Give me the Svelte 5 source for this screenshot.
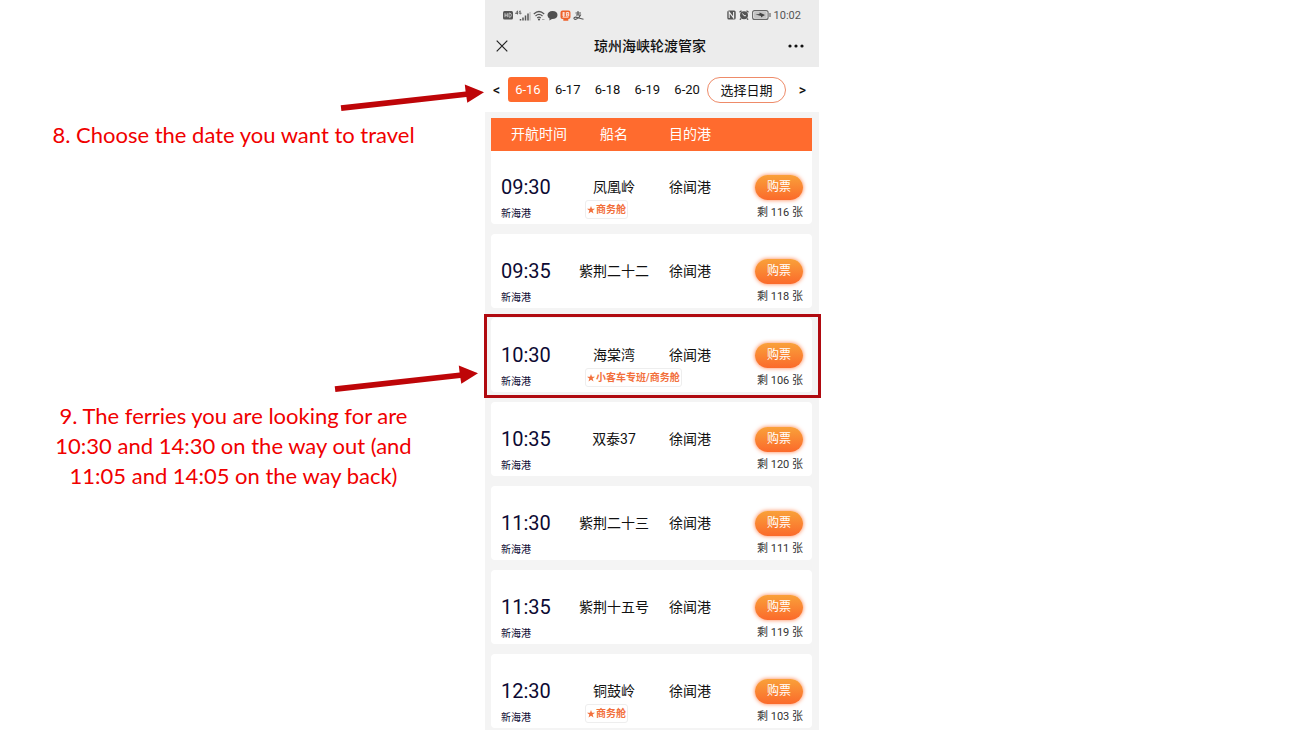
<script>
  const dates = ['6-16', '6-17', '6-18', '6-19', '6-20'];
  let selected = $state('6-16');

  const sailings = [
    { time: '09:30', ship: '凤凰岭', tag: '商务舱', left: 116 },
    { time: '09:35', ship: '紫荆二十二', tag: '', left: 118 },
    { time: '10:30', ship: '海棠湾', tag: '小客车专班/商务舱', left: 106, marked: true },
    { time: '10:35', ship: '双泰37', tag: '', left: 120 },
    { time: '11:30', ship: '紫荆二十三', tag: '', left: 111 },
    { time: '11:35', ship: '紫荆十五号', tag: '', left: 119 },
    { time: '12:30', ship: '铜鼓岭', tag: '商务舱', left: 103 }
  ];
</script>

{#snippet arrow()}
  <svg class="arrow" width="146" height="28" viewBox="0 0 146 28" aria-hidden="true">
    <path d="M1.7 21.200 126.600 7.400 125.800 .5 145 8.200 128.300 18.800 127.400 12.900 2.400 27Z" fill="#be0508" />
  </svg>
{/snippet}

<div class="slide">
  <aside class="notes">
    <div class="step">
      {@render arrow()}
      <p>8. Choose the date you want to travel</p>
    </div>
    <div class="step second">
      {@render arrow()}
      <p>9. The ferries you are looking for are<br />10:30 and 14:30 on the way out (and<br />11:05 and 14:05 on the way back)</p>
    </div>
  </aside>

  <main class="phone">
    <header>
      <div class="status">
        <div class="icons">
          <svg width="10" height="10" viewBox="0 0 10 10" aria-hidden="true">
            <rect y="1" width="10" height="8.500" rx="1.500" fill="#555" />
            <path d="M2 3.200v4M4.300 3.200v4M2 5.200h2.300M6 3.200v4h.8q1.500 0 1.500-2t-1.500-2z" fill="none" stroke="#ddd" stroke-width=".8" />
          </svg>
          <svg width="16" height="11" viewBox="0 0 16 11" aria-hidden="true">
            <path d="M2.500 4.500V.8L.5 3.500h2.600M6 1.300q-1.800-1-1.800 1t1.800 1.600V2.700h-.8" fill="none" stroke="#555" stroke-width=".8" />
            <path d="M5.500 10.500V9M8 10.500V7.500M10.500 10.500V5.500M13 10.500V3.500" stroke="#555" stroke-width="1.500" />
            <path d="M15 10.500V2" stroke="#bbb" stroke-width="1.200" />
          </svg>
          <svg width="12" height="11" viewBox="0 0 12 11" aria-hidden="true">
            <path d="M.8 4Q6-1 11.200 4M2.500 6Q6 2.800 9.500 6M4.200 8Q6 6.400 7.800 8" fill="none" stroke="#555" stroke-width="1.200" />
            <circle cx="6" cy="9.500" r="1.100" fill="#555" />
            <path d="M9 9.500h2.500" stroke="#aaa" />
          </svg>
          <svg width="11" height="11" viewBox="0 0 11 11" aria-hidden="true">
            <path d="M5.500 1C2.500 1 .5 2.700.5 5c0 1.600.8 2.800 2.100 3.500L2.300 10.500 5 9.100c3.300.1 5.500-1.700 5.500-4.100S8.500 1 5.500 1Z" fill="#505050" />
          </svg>
          <svg width="11" height="11" viewBox="0 0 11 11" aria-hidden="true">
            <path d="M2.500.5h6q2 0 2 2v4.500q0 2-2 2H8.300V10.800H3.300V9H2.500q-2 0-2-2V2.500q0-2 2-2Z" fill="#ee622c" />
            <path d="M2.200 3h3M3.700 2v5M2 5h3M6.400 2.500h2.300v3.500H6.400zM6.400 4.200h2.300M2.500 7.200h6" fill="none" stroke="#fff" stroke-width=".8" />
          </svg>
          <svg width="11" height="11" viewBox="0 0 11 11" aria-hidden="true">
            <path d="M2.500 3h5.500M5 1v4M3 5h4.500Q6.500 8 3 9.200C.8 9.800.2 7.700 2 7.200c2-.4 4.500 1.300 8.500 2" fill="none" stroke="#555" stroke-width="1.100" />
          </svg>
        </div>
        <div class="icons right">
          <svg width="9" height="10" viewBox="0 0 9 10" aria-hidden="true">
            <rect x=".3" y=".5" width="8.400" height="9" rx="1.500" fill="#555" />
            <path d="M2.200 8V2.200L6.600 7.800V2" fill="none" stroke="#eee" stroke-width="1.100" />
          </svg>
          <svg width="10" height="10" viewBox="0 0 10 10" aria-hidden="true">
            <circle cx="5" cy="5.300" r="4" fill="#555" />
            <path d="M.5 2.300 2.500.7M7.500.7l2 1.600M2 8.500.9 9.700M8 8.500l1.100 1.200" stroke="#555" stroke-width="1.300" />
            <path d="M3.500 3.500 5 5.700h1.900" fill="none" stroke="#eee" />
          </svg>
          <svg width="19" height="10" viewBox="0 0 19 10" aria-hidden="true">
            <rect x=".6" y=".6" width="15.500" height="8.800" rx="2" fill="none" stroke="#666" stroke-width="1.100" />
            <rect x="2" y="2" width="12.700" height="6" rx="1" fill="#c4c4c4" />
            <path d="M3.500 4.600 7.500 4V2.500L13 4.900 9 7.500V5.900Z" fill="#444" />
            <path d="M18 3v4" stroke="#666" stroke-width="1.200" />
          </svg>
          <span class="clock">10:02</span>
        </div>
      </div>
      <div class="title">
        <button class="plain" aria-label="关闭">
          <svg width="12" height="12" viewBox="0 0 12 12"><path d="M.7.7l10.600 10.600M11.300.7.7 11.300" stroke="#222" stroke-width="1.200" /></svg>
        </button>
        <h1>琼州海峡轮渡管家</h1>
        <button class="plain" aria-label="更多">
          <svg width="16" height="4" viewBox="0 0 16 4"><g fill="#111"><circle cx="2" cy="2" r="1.600" /><circle cx="8" cy="2" r="1.600" /><circle cx="14" cy="2" r="1.600" /></g></svg>
        </button>
      </div>
    </header>

    <nav class="dates">
      <button class="plain step-day" aria-label="前一天">&lt;</button>
      <div class="days">
        {#each dates as date}
          <button class="day" class:active={date === selected} onclick={() => (selected = date)}>{date}</button>
        {/each}
      </div>
      <button class="pick">选择日期</button>
      <button class="plain step-day" aria-label="后一天">&gt;</button>
    </nav>

    <table>
      <thead>
        <tr>
          <th scope="col">开航时间</th>
          <th scope="col">船名</th>
          <th scope="col">目的港</th>
          <td></td>
        </tr>
      </thead>
      <tbody>
        {#each sailings as s}
          <tr class:marked={s.marked}>
            <td class="depart"><span class="time">{s.time}</span><span class="from">新海港</span></td>
            <td class="ship">
              <span class="name">{s.ship}</span>
              {#if s.tag}<span class="tag"><svg width="8" height="8" viewBox="0 0 8 8" aria-hidden="true"><path d="M4 0 5 2.800H8L5.600 4.600 6.500 7.600 4 5.800 1.500 7.600 2.400 4.600 0 2.800H3Z" fill="#f2703c" /></svg>{s.tag}</span>{/if}
            </td>
            <td class="dest">徐闻港</td>
            <td class="buy"><button>购票</button><span class="left">剩 {s.left} 张</span></td>
          </tr>
        {/each}
      </tbody>
    </table>
  </main>
</div>

<style>
  :global(body) {
    margin: 0;
    background: #fff;
  }
  .slide {
    display: grid;
    grid-template-columns: 485fr 334fr 483fr;
    min-height: 100vh;
    font-family: Roboto, 'Noto Sans CJK SC', sans-serif;
  }
  button {
    font: inherit;
    color: inherit;
    padding: 0;
    cursor: pointer;
  }
  .plain {
    border: 0;
    background: none;
    display: flex;
    align-items: center;
    justify-content: center;
  }

  .notes {
    padding-top: 84px;
    color: #f00000;
    font-family: Lato, sans-serif;
    font-size: 22px;
    line-height: 30px;
    text-align: center;
  }
  .step {
    display: flex;
    flex-direction: column;
  }
  .step.second {
    margin-top: 215px;
  }
  .arrow {
    align-self: flex-end;
  }
  .second .arrow {
    margin-right: 6px;
  }
  .notes p {
    margin: 8px 18px 0 0;
    white-space: nowrap;
  }

  .phone {
    background: #f4f4f4;
    color: #111;
    font-size: 14px;
  }
  header {
    background: #ececec;
    height: 67px;
  }
  .status {
    display: flex;
    justify-content: space-between;
    padding: 5px 18px 0;
    box-sizing: border-box;
    height: 25px;
  }
  .icons {
    display: flex;
    align-items: center;
    gap: 2px;
  }
  .icons.right {
    gap: 3px;
  }
  .clock {
    font-size: 11px;
    color: #555;
  }
  .title {
    display: flex;
    justify-content: space-between;
    align-items: center;
    padding: 0 15px 0 11px;
    height: 42px;
  }
  .title .plain {
    width: 16px;
  }
  .title .plain:first-child {
    width: 12px;
    margin-right: 4px;
  }
  h1 {
    margin: 0;
    font-size: 14px;
    line-height: 20px;
    font-weight: 500;
  }

  .dates {
    display: flex;
    align-items: center;
    background: #fff;
    height: 45px;
    margin-bottom: 6px;
    font-size: 13px;
  }
  .step-day {
    width: 23px;
    font-size: 14px;
    font-weight: 500;
  }
  .step-day:last-child {
    width: 33px;
  }
  .days {
    display: flex;
    flex: 1;
  }
  .day {
    flex: 1;
    height: 25px;
    border: 0;
    border-radius: 3px;
    background: none;
  }
  .day.active {
    background: #ff6b2e;
    color: #fff;
  }
  .pick {
    width: 79px;
    height: 26px;
    border: 1px solid #ee8b69;
    border-radius: 13px;
    background: #fff;
  }

  table,
  tbody,
  thead {
    display: block;
  }
  table {
    margin: 0 7px 0 6px;
  }
  tr {
    display: grid;
    grid-template-columns: minmax(0, 85fr) minmax(0, 76fr) minmax(0, 76fr) minmax(0, 84fr);
    position: relative;
  }
  th,
  td {
    padding: 0;
    text-align: center;
  }
  thead tr {
    background: #ff6b2e;
    color: #fff;
    line-height: 33px;
  }
  th {
    font-weight: 400;
    white-space: nowrap;
  }
  th:first-child {
    padding-left: 11px;
  }
  tbody {
    display: grid;
    gap: 10px;
  }
  tbody tr {
    height: 74px;
    background: #fff;
    border-radius: 4px;
  }
  tbody td {
    display: flex;
    flex-direction: column;
    padding-top: 25px;
    white-space: nowrap;
    line-height: 24px;
  }
  tbody tr:first-child {
    border-radius: 0 0 4px 4px;
    height: 73px;
  }
  tbody tr:first-child td {
    padding-top: 24px;
  }
  .depart {
    align-items: flex-start;
    padding-left: 10px;
    color: #0c0a33;
  }
  .time {
    font-size: 20px;
  }
  .from {
    font-size: 10px;
    line-height: 16px;
    margin-top: 7px;
  }
  .tag {
    display: flex;
    align-items: center;
    gap: 1px;
    align-self: flex-start;
    margin: 1px 0 0 9px;
    padding: 0 1px;
    height: 17px;
    border: 1px solid #eee;
    border-radius: 3px;
    font-size: 10px;
    font-weight: 700;
    color: #f2703c;
  }
  .buy {
    align-items: flex-end;
    padding-right: 9px;
  }
  .buy button {
    width: 48px;
    height: 25px;
    border: 0;
    border-radius: 13px;
    background: linear-gradient(#f9a13a, #fb6a2b);
    box-shadow: 0 0 4px #ff7c45;
    color: #fff;
    font-size: 12px;
    line-height: 25px;
  }
  .left {
    font-size: 11px;
    line-height: 16px;
    margin-top: 5px;
    color: #333;
  }
  .marked::after {
    content: '';
    position: absolute;
    inset: -4px -9px -6px -7px;
    border: 3px solid #b00a10;
    z-index: 1;
    pointer-events: none;
  }
</style>
